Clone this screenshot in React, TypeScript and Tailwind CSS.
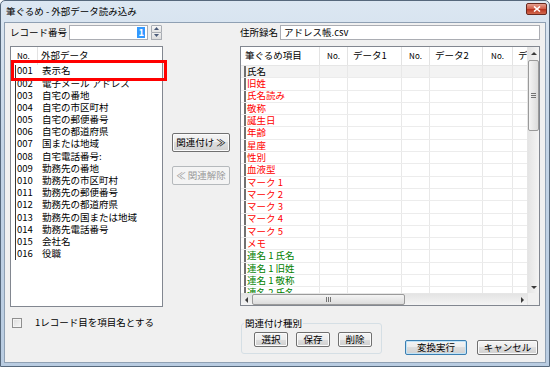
import React from "react";

const leftRows: [string, string][] = [
  ["001", "表示名"],
  ["002", "電子メール アドレス"],
  ["003", "自宅の番地"],
  ["004", "自宅の市区町村"],
  ["005", "自宅の郵便番号"],
  ["006", "自宅の都道府県"],
  ["007", "国または地域"],
  ["008", "自宅電話番号:"],
  ["009", "勤務先の番地"],
  ["010", "勤務先の市区町村"],
  ["011", "勤務先の郵便番号"],
  ["012", "勤務先の都道府県"],
  ["013", "勤務先の国または地域"],
  ["014", "勤務先電話番号"],
  ["015", "会社名"],
  ["016", "役職"],
];

const gridRows: [string, string][] = [
  ["氏名", "text-black"],
  ["旧姓", "text-[#ff0000]"],
  ["氏名読み", "text-[#ff0000]"],
  ["敬称", "text-[#ff0000]"],
  ["誕生日", "text-[#ff0000]"],
  ["年齢", "text-[#ff0000]"],
  ["星座", "text-[#ff0000]"],
  ["性別", "text-[#ff0000]"],
  ["血液型", "text-[#ff0000]"],
  ["マーク 1", "text-[#ff0000]"],
  ["マーク 2", "text-[#ff0000]"],
  ["マーク 3", "text-[#ff0000]"],
  ["マーク 4", "text-[#ff0000]"],
  ["マーク 5", "text-[#ff0000]"],
  ["メモ", "text-[#ff0000]"],
  ["連名 1 氏名", "text-[#008000]"],
  ["連名 1 旧姓", "text-[#008000]"],
  ["連名 1 敬称", "text-[#008000]"],
  ["連名 2 氏名", "text-[#008000]"],
];

const colW = ["w-[79px]", "w-[28px]", "w-[54px]", "w-[28px]", "w-[53px]", "w-[30px]", "w-[14px]"];

function Btn({
  children,
  className = "",
  disabled = false,
  def = false,
}: {
  children: React.ReactNode;
  className?: string;
  disabled?: boolean;
  def?: boolean;
}) {
  const base =
    "flex items-center justify-center rounded-[2px] border leading-none whitespace-nowrap";
  if (disabled) {
    return (
      <div className={`${base} border-[#b5b9bc] bg-[#f4f4f4] text-[#9a9a9a] ${className}`}>
        {children}
      </div>
    );
  }
  return (
    <div
      className={`${base} ${
        def
          ? "border-[#3c7fb1] shadow-[inset_0_0_0_1px_#bfe3f8]"
          : "border-[#707070] shadow-[inset_0_0_0_1px_#fbfbfb]"
      } bg-[linear-gradient(to_bottom,#f4f4f4_0%,#ececec_50%,#dedede_50%,#d0d0d0_100%)] text-black ${className}`}
    >
      {children}
    </div>
  );
}

function Tri({ dir }: { dir: "up" | "down" | "left" | "right" }) {
  const pts =
    dir === "up"
      ? "0,4 3,1 6,4"
      : dir === "down"
      ? "0,1 3,4 6,1"
      : dir === "left"
      ? "4,0 1,3 4,6"
      : "1,0 4,3 1,6";
  const w = dir === "up" || dir === "down" ? 6 : 5;
  const h = dir === "up" || dir === "down" ? 5 : 6;
  return (
    <svg width={w} height={h} viewBox={`0 0 ${w} ${h}`}>
      <polygon points={pts} fill="#3b3b3b" />
    </svg>
  );
}

export default function App() {
  return (
    <div className="w-[550px] h-[367px] overflow-hidden font-['Noto_Sans_CJK_JP','Noto_Sans',sans-serif] text-[9.5px] text-black">
      <div className="w-full h-full flex flex-col rounded-t-[5px] border border-[#56687c] bg-[linear-gradient(to_bottom,#dce7f2,#c3d4e6_40%,#b9cce1)]">
        {/* title bar */}
        <div className="h-[21px] flex items-center shrink-0">
          <span className="pl-[5px] text-[9.5px] leading-none text-black">筆ぐるめ - 外部データ読み込み</span>
          <div className="ml-auto mr-[2px] self-start mt-[2px] w-[21px] h-[12px] rounded-[2px] border border-[#6b2a20] bg-[linear-gradient(to_bottom,#e6a090,#d05a45_50%,#b8321e_51%,#d26a4f)] flex items-center justify-center">
            <svg width="8" height="6" viewBox="0 0 8 6">
              <path d="M1 0.5 L7 5.5 M7 0.5 L1 5.5" stroke="white" strokeWidth="1.6" />
            </svg>
          </div>
        </div>

        {/* body */}
        <div className="mx-[3px] h-[341px] shrink-0 border border-[#8fa0b3] bg-[#f0f0f0] pl-[5px] pt-[2px] flex items-start">
          {/* left column */}
          <div className="w-[153px] flex flex-col">
            <div className="h-[15px] flex items-center">
              <span className="w-[59px] leading-none">レコード番号</span>
              <div className="w-[79px] h-[15px] border border-[#abadb3] bg-white flex items-center justify-end pr-[2px]">
                <span className="bg-[#3399ff] text-white px-[1px] leading-[11px] font-bold">1</span>
              </div>
              <div className="ml-[3px] w-[11px] h-[15px] flex flex-col">
                <div className="h-[7.5px] border border-[#a9adb3] rounded-t-[1px] bg-[linear-gradient(to_bottom,#f7f7f7,#e3e3e3)] flex items-center justify-center">
                  <svg width="5" height="3" viewBox="0 0 5 3"><polygon points="0,3 2.5,0 5,3" fill="#4a5a78" /></svg>
                </div>
                <div className="h-[7.5px] border border-t-0 border-[#a9adb3] rounded-b-[1px] bg-[linear-gradient(to_bottom,#f0f0f0,#dcdcdc)] flex items-center justify-center">
                  <svg width="5" height="3" viewBox="0 0 5 3"><polygon points="0,0 2.5,3 5,0" fill="#4a5a78" /></svg>
                </div>
              </div>
            </div>

            <div className="mt-[6px] h-[261px] relative border border-[#828790] bg-white">
              <div className="h-[18px] flex items-center">
                <span className="w-[27px] h-full flex items-center pl-[6px] text-[8px] border-r border-[#e3e3e3]">No.</span>
                <span className="pl-[3px] leading-none">外部データ</span>
              </div>
              <div className="flex flex-col">
                {leftRows.map(([n, t]) => (
                  <div key={n} className="h-[12.2px] flex items-center leading-none">
                    <div className="ml-[4px] h-full border-l border-[#3a3a3a] pl-[1px] flex items-center">
                      <span className="w-[25px]">{n}</span>
                      <span className="whitespace-nowrap">{t}</span>
                    </div>
                  </div>
                ))}
              </div>
              <div className="absolute left-0 top-[13px] w-[156px] h-[21px] border-[3px] border-[#ff0000]" />
            </div>

            <div className="mt-[11px] h-[10px] flex items-center">
              <div className="ml-[2px] w-[10px] h-[10px] border border-[#8f8f8f] bg-[linear-gradient(135deg,#dcdcdc,#f7f7f7)] shadow-[inset_0_0_0_1px_#f4f4f4]" />
              <span className="ml-[13px] leading-none">1レコード目を項目名とする</span>
            </div>
          </div>

          {/* middle buttons */}
          <div className="ml-[9px] w-[58px] pt-[108px] flex flex-col">
            <Btn className="h-[19px] w-[58px]">関連付け ≫</Btn>
            <Btn disabled className="mt-[14px] h-[19px] w-[58px]">≪ 関連解除</Btn>
          </div>

          {/* right column */}
          <div className="ml-[10px] w-[300px] flex flex-col">
            <div className="h-[15px] flex items-center">
              <span className="w-[40px] leading-none">住所録名</span>
              <div className="w-[260px] h-[15px] border border-[#abadb3] bg-white flex items-center pl-[3px] leading-none">
                アドレス帳.csv
              </div>
            </div>

            <div className="mt-[6px] h-[260px] border border-[#828790] bg-white flex">
              <div className="w-[286px] flex flex-col">
                <div className="h-[19px] flex shrink-0 border-b border-[#e6e6e6]">
                  {["筆ぐるめ項目", "No.", "データ1", "No.", "データ2", "No.", "デ"].map((h, i) => (
                    <div
                      key={i}
                      className={`${colW[i]} h-full flex items-center overflow-hidden whitespace-nowrap leading-none ${
                        i < 6 ? "border-r border-[#e3e3e3]" : ""
                      } ${h === "No." ? "justify-center text-[8px]" : i === 0 ? "pl-[4px]" : "pl-[5px]"}`}
                    >
                      {h}
                    </div>
                  ))}
                </div>
                <div className="flex-1 overflow-hidden flex flex-col">
                  {gridRows.map(([t, c], r) => (
                    <div
                      key={r}
                      className={`h-[12.3px] shrink-0 flex border-b border-[#ececec] ${r === 0 ? "bg-[#f3f3f3]" : ""}`}
                    >
                      {colW.map((w, i) => (
                        <div
                          key={i}
                          className={`${w} h-full ${i < 6 ? "border-r border-[#e8e8e8]" : ""} ${
                            i === 0 ? "pl-[3px]" : ""
                          }`}
                        >
                          {i === 0 && (
                            <div className={`h-full border-l-2 border-[#707070] pl-[1px] flex items-center leading-none whitespace-nowrap ${c}`}>
                              {t}
                            </div>
                          )}
                        </div>
                      ))}
                    </div>
                  ))}
                </div>
                {/* horizontal scrollbar */}
                <div className="h-[12px] shrink-0 flex bg-[linear-gradient(to_bottom,#e4e4e4,#f4f4f4)] border-t border-[#e6e6e6]">
                  <div className="w-[11px] flex items-center justify-center">
                    <Tri dir="left" />
                  </div>
                  <div className="w-[153px] rounded-[2px] border border-[#9a9a9a] bg-[linear-gradient(to_bottom,#f4f4f4,#dcdcdc)] flex items-center justify-center">
                    <svg width="5" height="5" viewBox="0 0 5 5">
                      <path d="M0.5 0 V5 M2.5 0 V5 M4.5 0 V5" stroke="#555" strokeWidth="0.8" />
                    </svg>
                  </div>
                  <div className="flex-1" />
                  <div className="w-[9px] flex items-center justify-center">
                    <Tri dir="right" />
                  </div>
                </div>
              </div>
              {/* vertical scrollbar */}
              <div className="w-[12px] flex flex-col border-l border-[#e6e6e6] bg-[linear-gradient(to_right,#e4e4e4,#f4f4f4)]">
                <div className="h-[13px] shrink-0 flex items-center justify-center">
                  <Tri dir="up" />
                </div>
                <div className="h-[71px] shrink-0 rounded-[2px] border border-[#9a9a9a] bg-[linear-gradient(to_right,#f4f4f4,#dcdcdc)] flex items-center justify-center">
                  <svg width="5" height="5" viewBox="0 0 5 5">
                    <path d="M0 0.5 H5 M0 2.5 H5 M0 4.5 H5" stroke="#555" strokeWidth="0.8" />
                  </svg>
                </div>
                <div className="flex-1" />
                <div className="h-[12px] shrink-0 flex items-center justify-center">
                  <Tri dir="down" />
                </div>
                <div className="h-[12px] shrink-0 bg-[#f0f0f0]" />
              </div>
            </div>

            <div className="mt-[17px] flex items-start">
              <div className="ml-[1px] w-[141px] h-[31px] relative rounded-[3px] border border-[#d5dfe5] flex items-start pl-[12px] pt-[8px]">
                <span className="absolute -top-[7px] left-[2px] bg-[#f0f0f0] px-[1px] leading-[12px]">関連付け種別</span>
                <Btn className="w-[34px] h-[15px]">選択</Btn>
                <Btn className="ml-[8px] w-[34px] h-[15px]">保存</Btn>
                <Btn className="ml-[8px] w-[34px] h-[15px]">削除</Btn>
              </div>
              <Btn def className="ml-[23px] mt-[17px] w-[62px] h-[15px]">変換実行</Btn>
              <Btn className="ml-[10px] mt-[17px] w-[61px] h-[15px]">キャンセル</Btn>
            </div>
          </div>
        </div>
      </div>
    </div>
  );
}
